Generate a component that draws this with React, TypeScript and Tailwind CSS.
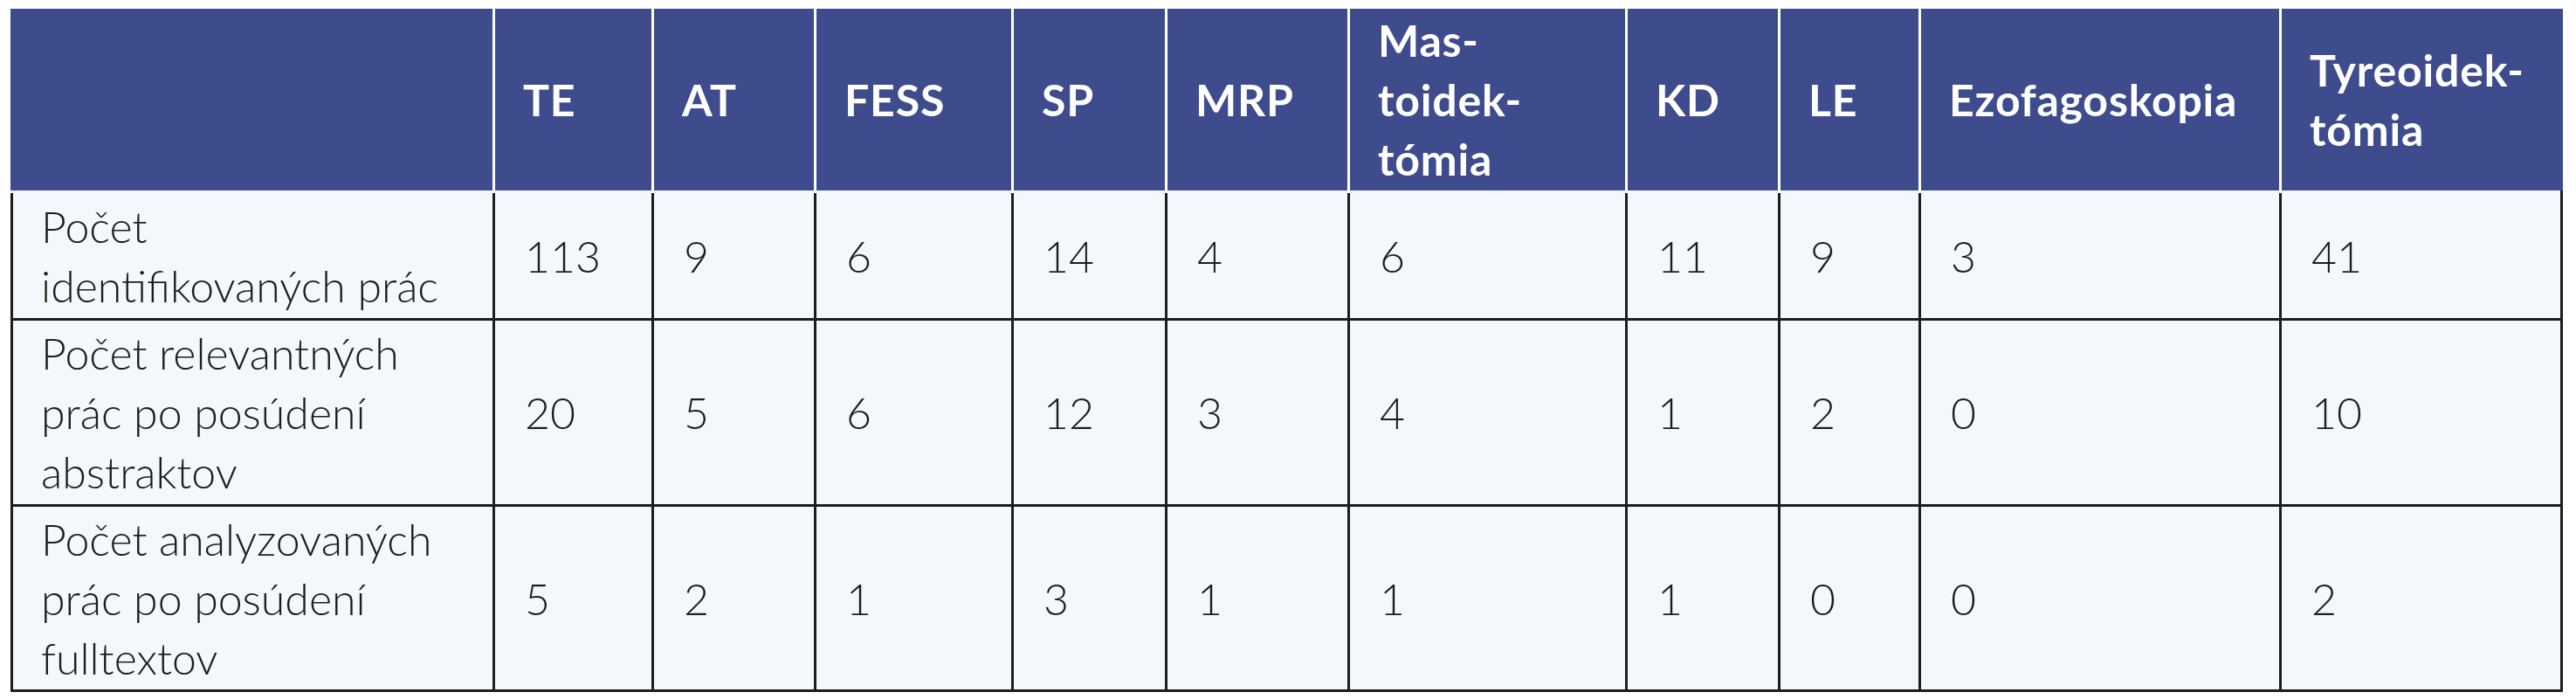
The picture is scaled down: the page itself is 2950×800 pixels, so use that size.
import React from "react";

const cols = "grid grid-cols-[552px_182px_186px_226px_176px_209px_318px_175px_161px_413px_322px]";

const headers: React.ReactNode[] = [
  "",
  "TE",
  "AT",
  "FESS",
  "SP",
  "MRP",
  <>Mas-<br />toidek-<br />tómia</>,
  "KD",
  "LE",
  "Ezofagoskopia",
  <>Tyreoidek-<br />tómia</>,
];

const rows: { label: React.ReactNode; values: string[]; h: string }[] = [
  {
    label: <>Počet<br />identifikovaných prác</>,
    values: ["113", "9", "6", "14", "4", "6", "11", "9", "3", "41"],
    h: "h-[149px]",
  },
  {
    label: <>Počet relevantných<br />prác po posúdení<br />abstraktov</>,
    values: ["20", "5", "6", "12", "3", "4", "1", "2", "0", "10"],
    h: "h-[213px]",
  },
  {
    label: <>Počet analyzovaných<br />prác po posúdení<br />fulltextov</>,
    values: ["5", "2", "1", "3", "1", "1", "1", "0", "0", "2"],
    h: "h-[212px]",
  },
];

export default function App() {
  return (
    <div className="w-[2950px] h-[800px] bg-white pt-[10px] pl-[12px] font-['Lato',sans-serif]">
      <div className="w-[2923px]">
        <div className={`${cols} h-[208px] bg-[#3e4c8e] pr-[3px] w-[2923px]`}>
          {headers.map((h, i) => (
            <div
              key={i}
              className={`flex items-center pl-[32px] border-l-[3px] ${i === 0 ? "border-[#3e4c8e]" : "border-white"} text-white font-bold text-[50px] leading-[68px] tracking-[0.8px]`}
            >
              <div>{h}</div>
            </div>
          ))}
        </div>
        {rows.map((r, ri) => (
          <div
            key={ri}
            className={`${cols} ${r.h} w-[2923px] bg-[#f4f8fd] border-b-[3px] border-r-[3px] border-[#1d1d1b] ${ri === 0 ? "pt-[3px]" : ""}`}
          >
            <div className="flex items-center pl-[32px] border-l-[3px] border-[#1d1d1b] text-[#1d1d1b] font-light text-[50px] leading-[68px]">
              <div>{r.label}</div>
            </div>
            {r.values.map((v, vi) => (
              <div
                key={vi}
                className="flex items-center pl-[34px] border-l-[3px] border-[#1d1d1b] text-[#1d1d1b] font-light text-[50px] leading-[68px]"
              >
                {v}
              </div>
            ))}
          </div>
        ))}
      </div>
    </div>
  );
}
